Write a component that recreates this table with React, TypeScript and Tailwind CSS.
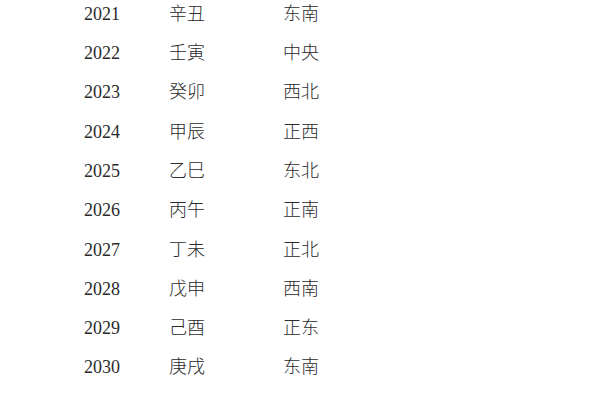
const ROWS = [
  ['2021', '辛丑', '东南'],
  ['2022', '壬寅', '中央'],
  ['2023', '癸卯', '西北'],
  ['2024', '甲辰', '正西'],
  ['2025', '乙巳', '东北'],
  ['2026', '丙午', '正南'],
  ['2027', '丁未', '正北'],
  ['2028', '戊申', '西南'],
  ['2029', '己酉', '正东'],
  ['2030', '庚戌', '东南'],
]

export default function App() {
  return (
    <div
      className="w-[600px] h-[400px] bg-white overflow-hidden text-[#2a2a2a] text-[18px]"
      style={{ fontFamily: '"Liberation Serif", "Noto Sans CJK SC", serif' }}
    >
      <div className="flex flex-col -mt-[5.4px] pl-[84px]">
        {ROWS.map(([year, gz, dir]) => (
          <div key={year} className="grid grid-cols-[85px_114px_auto] h-[39.3px] items-center">
            <span>{year}</span>
            <span className="font-light">{gz}</span>
            <span className="font-light">{dir}</span>
          </div>
        ))}
      </div>
    </div>
  )
}
